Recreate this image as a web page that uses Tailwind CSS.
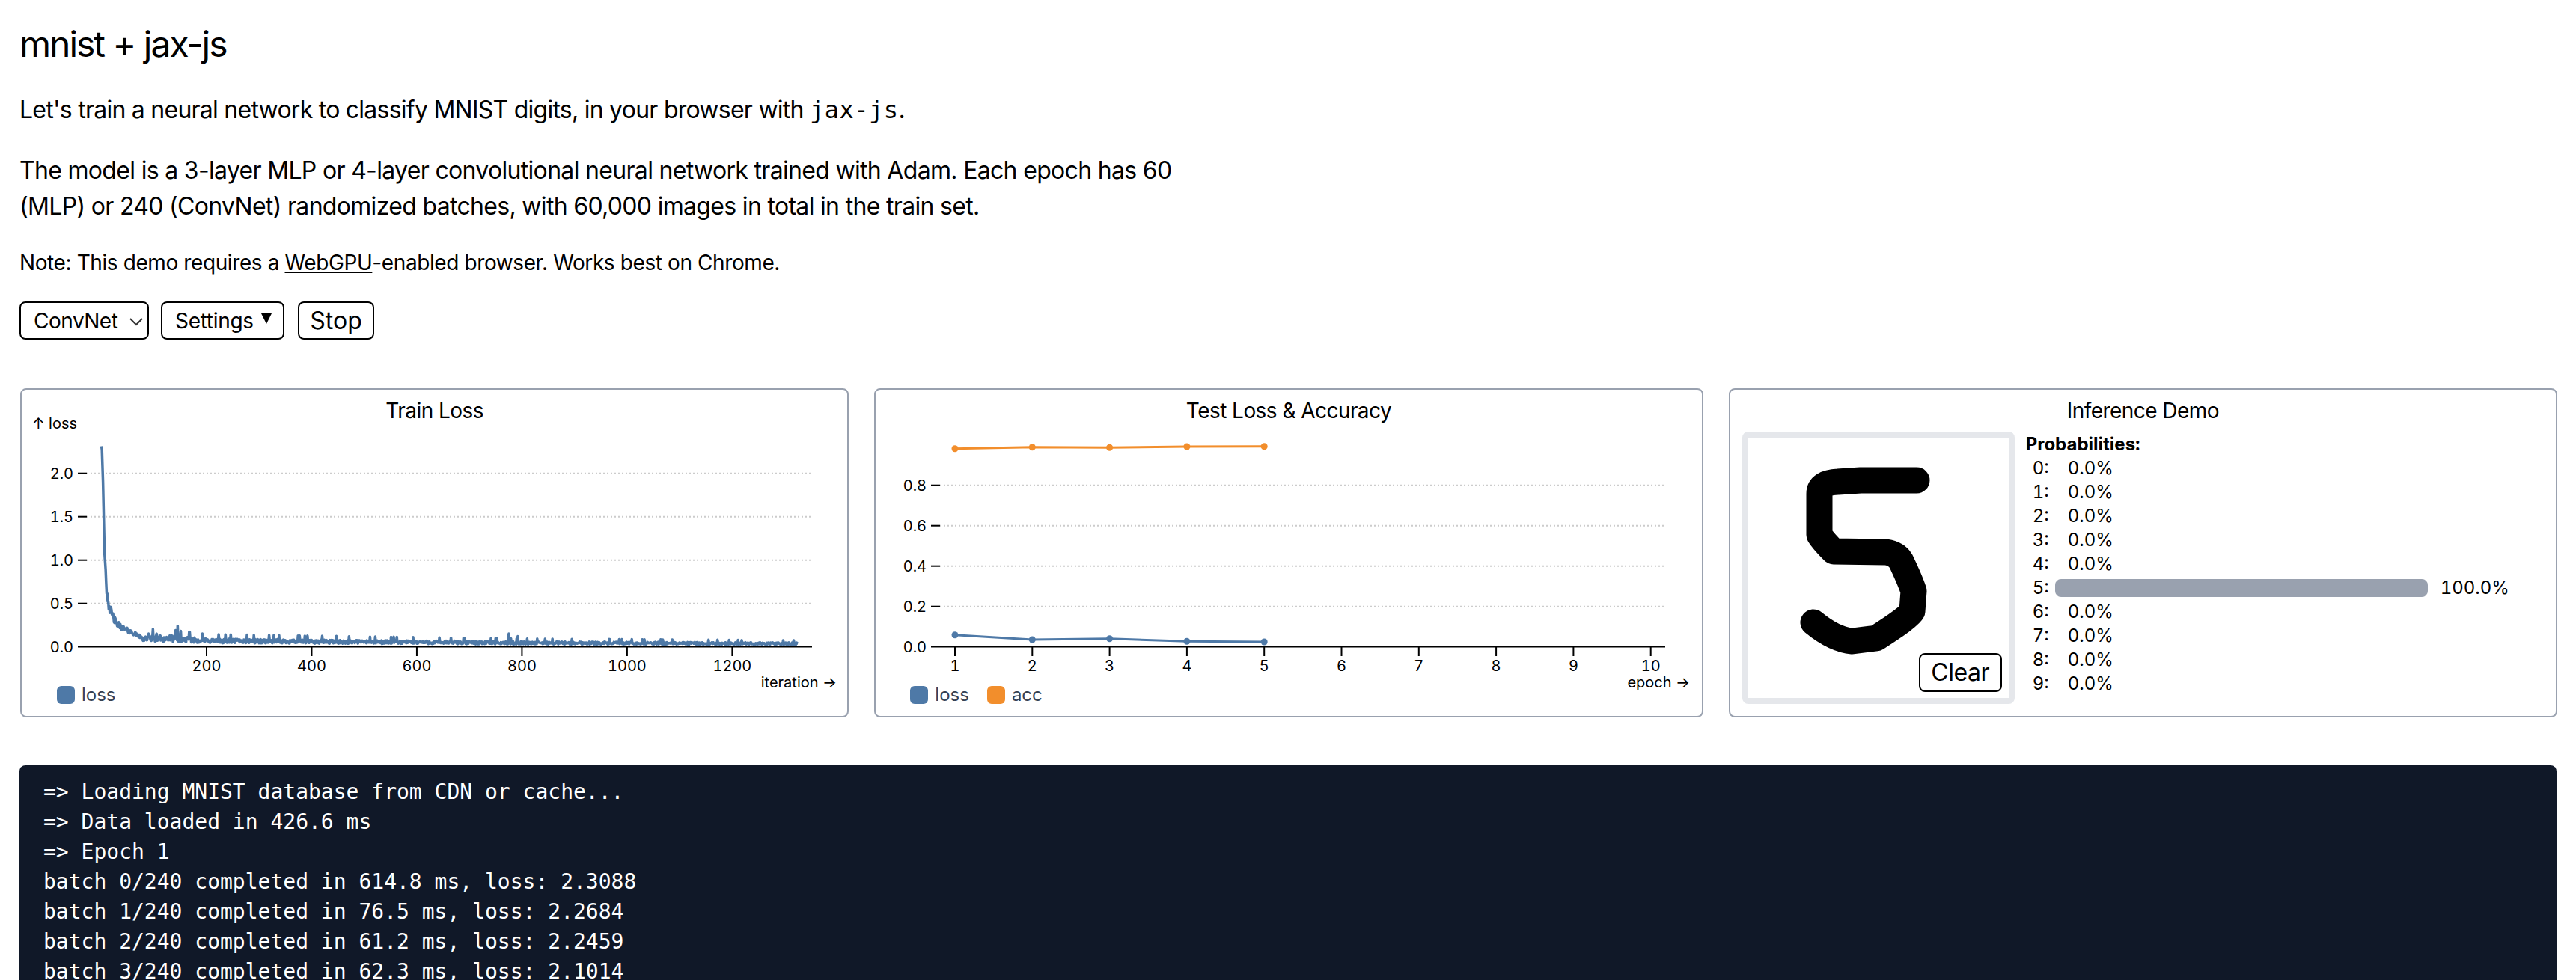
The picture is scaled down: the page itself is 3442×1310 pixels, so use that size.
<!DOCTYPE html>
<html lang="en">

<head>
    <meta charset="UTF-8">
    <meta name="viewport" content="width=device-width, initial-scale=1.0">
    <title>mnist + jax-js</title>
    <script src="https://cdn.jsdelivr.net/npm/@tailwindcss/browser@4"></script>
</head>

<body class="h-[1310px] overflow-hidden bg-white font-['Inter',sans-serif] text-black">
    <main class="px-[26px] pt-[27px]">
        <h1 class="text-[48px] leading-[64px] tracking-[-2px]">mnist + jax-js</h1>

        <p class="mt-[32px] text-[32px] leading-[48px] tracking-[-0.75px]">Let's train a neural network to classify MNIST digits, in your browser with <code class="font-['DejaVu_Sans_Mono',monospace] text-[32px] tracking-[0.5px]">jax-js</code>.</p>

        <p class="mt-[33px] max-w-[1600px] text-[32px] leading-[48px] tracking-[-0.68px]">The model is a 3-layer MLP or 4-layer convolutional neural network trained with Adam. Each epoch has 60 (MLP) or 240 (ConvNet) randomized batches, with 60,000 images in total in the train set.</p>

        <p class="mt-[31px] text-[28px] leading-[40px] tracking-[-0.4px]">Note: This demo requires a <a href="#" class="underline">WebGPU</a>-enabled browser. Works best on Chrome.</p>

        <!-- Controls -->
        <div class="mt-[32px] flex h-[51px]">
            <div class="relative w-[173px]">
                <select class="h-full w-full appearance-none rounded-lg border-2 border-black bg-white pl-[17px] text-[28px] tracking-[-0.5px]">
                    <option>ConvNet</option>
                </select>
                <svg class="absolute left-[147px] top-[22px]" width="18" height="11" viewBox="0 0 18 11" fill="none" stroke="#333" stroke-width="2"><path d="M1 1l8 8 8-8" /></svg>
            </div>
            <button class="ml-[16px] flex w-[165px] items-center rounded-lg border-2 border-black pl-[17px] text-[28px] tracking-[-0.3px]">
                Settings
                <svg class="ml-[10px] mt-[-5px]" width="14" height="14" viewBox="0 0 14 14"><path d="M0 0h14L7 14z" /></svg>
            </button>
            <button class="ml-[18px] w-[102px] rounded-lg border-2 border-black text-[32px]">Stop</button>
        </div>

        <!-- Charts -->
        <div class="ml-[1px] mr-[-1px] mt-[65px] grid h-[440px] grid-cols-3 gap-[34px]">
            <section class="rounded-lg border-2 border-gray-400 pt-[8px]">
                <h2 class="h-[26px] text-center text-[28px] leading-[40px] tracking-[-0.55px]">Train Loss</h2>
                <svg id="train-chart" class="ml-[-1px] block h-[362px] w-full overflow-visible tabular-nums"></svg>
                <div class="flex h-[24px] gap-[24px] pl-[47px] text-[24px] leading-[24px] text-gray-700">
                    <span class="flex gap-[9px]"><i class="h-[24px] w-[24px] rounded-md bg-[#4e79a7]"></i>loss</span>
                </div>
            </section>

            <section class="rounded-lg border-2 border-gray-400 pt-[8px]">
                <h2 class="h-[26px] text-center text-[28px] leading-[40px] tracking-[-0.55px]">Test Loss &amp; Accuracy</h2>
                <svg id="test-chart" class="ml-[-2px] block h-[362px] w-full overflow-visible tabular-nums"></svg>
                <div class="flex h-[24px] gap-[24px] pl-[46px] text-[24px] leading-[24px] text-gray-700">
                    <span class="flex gap-[9px]"><i class="h-[24px] w-[24px] rounded-md bg-[#4e79a7]"></i>loss</span>
                    <span class="flex gap-[9px]"><i class="h-[24px] w-[24px] rounded-md bg-[#f28e2c]"></i>acc</span>
                </div>
            </section>

            <section class="rounded-lg border-2 border-gray-400 pt-[8px]">
                <h2 class="h-[48px] text-center text-[28px] leading-[40px] tracking-[-0.55px]">Inference Demo</h2>
                <div class="flex pl-[16px]">
                    <!-- Drawing canvas -->
                    <div class="relative h-[364px] w-[364px] rounded-lg border-8 border-gray-200">
                        <svg width="348" height="348" fill="none" stroke="#000" stroke-width="35" stroke-linecap="round" stroke-linejoin="round">
                            <path d="M225 57 L190 57 L150 57 L120 59 Q95 60 95 75 L95 130 Q100 138 114 152 L184 153 Q198 155 204 165 Q216 190 221 205 L219 232 Q215 240 171 268 L139 272 Q115 270 87 247" />
                        </svg>
                        <button class="absolute bottom-[8px] right-[9px] h-[52px] w-[111px] rounded-lg border-2 border-black bg-white text-[32px] tracking-[-0.5px]">Clear</button>
                    </div>

                    <!-- Probabilities -->
                    <div class="ml-[15px] pt-[1px] text-[24px] leading-[32px] tabular-nums">
                        <div class="font-bold">Probabilities:</div>
                        <div id="probs"></div>
                    </div>
                </div>
            </section>
        </div>

        <!-- Log -->
        <pre class="mt-[64px] rounded-lg bg-gray-900 px-[32px] py-[16px] font-['DejaVu_Sans_Mono',monospace] text-[28px] leading-[40px] text-white">=&gt; Loading MNIST database from CDN or cache...
=&gt; Data loaded in 426.6 ms
=&gt; Epoch 1
batch 0/240 completed in 614.8 ms, loss: 2.3088
batch 1/240 completed in 76.5 ms, loss: 2.2684
batch 2/240 completed in 61.2 ms, loss: 2.2459
batch 3/240 completed in 62.3 ms, loss: 2.1014</pre>
    </main>

    <script>
    const SVG_NS = "http://www.w3.org/2000/svg";

    function add(svg, tag, attrs, text) {
        const el = document.createElementNS(SVG_NS, tag);
        for (const k in attrs) el.setAttribute(k, attrs[k]);
        if (text) el.textContent = text;
        svg.appendChild(el);
    }

    // Axes in the same shape for both charts, values are pixels inside the svg
    function drawAxes(svg, opts) {
        opts.yTicks.forEach(t => {
            add(svg, "line", { x1: 88, x2: opts.gridEnd, y1: t.y, y2: t.y, stroke: "#ccc", "stroke-width": 2, "stroke-dasharray": "2 3" });
            add(svg, "line", { x1: 76, x2: 88, y1: t.y, y2: t.y, stroke: "#000", "stroke-width": 2 });
            add(svg, "text", { x: 70, y: t.y + 7, "text-anchor": "end", "font-size": 20 }, t.label);
        });
        add(svg, "line", { x1: 76, x2: opts.axisEnd, y1: 309.5, y2: 309.5, stroke: "#000", "stroke-width": 2 });
        add(svg, "text", { x: 70, y: 316.5, "text-anchor": "end", "font-size": 20 }, "0.0");
        opts.xTicks.forEach(t => {
            add(svg, "line", { x1: t.x, x2: t.x, y1: 309.5, y2: 322, stroke: "#000", "stroke-width": 2 });
            add(svg, "text", { x: t.x, y: 342, "text-anchor": "middle", "font-size": 20 }, t.label);
        });
        add(svg, "text", { x: opts.labelEnd, y: 364, "text-anchor": "end", "font-size": 20 }, opts.xLabel);
    }

    // Train loss
    const trainSvg = document.getElementById("train-chart");
    drawAxes(trainSvg, {
        gridEnd: 1056, axisEnd: 1057, labelEnd: 1090, xLabel: "iteration \u2192",
        yTicks: [["2.0", 77.7], ["1.5", 135.7], ["1.0", 193.7], ["0.5", 251.7]].map(([label, y]) => ({ label, y })),
        xTicks: [200, 400, 600, 800, 1000, 1200].map(i => ({ label: String(i), x: 107.5 + i * 0.7024 })),
    });
    add(trainSvg, "text", { x: 15, y: 18, "font-size": 20 }, "\u2191 loss");

    // Small seeded random so the curve is the same on every load
    let seed = 42;
    function rand() {
        seed = (seed * 1664525 + 1013904223) % 4294967296;
        return seed / 4294967296;
    }

    const envelope = [[0, 2.31], [1, 2.27], [3, 1.9], [6, 1.07], [9, 0.8], [11, 0.6], [17, 0.41], [28, 0.27], [45, 0.2], [60, 0.16], [78, 0.1], [130, 0.095], [200, 0.07], [400, 0.06], [800, 0.045], [1325, 0.035]];
    const spikes = { 145: 0.24, 775: 0.15, 792: 0.12, 90: 0.15, 105: 0.15 };

    function baseLoss(i) {
        for (let k = 1; k < envelope.length; k++) {
            if (i <= envelope[k][0]) {
                const [x0, y0] = envelope[k - 1], [x1, y1] = envelope[k];
                return y0 + (y1 - y0) * (i - x0) / (x1 - x0);
            }
        }
        return 0.035;
    }

    let d = "";
    for (let i = 0; i <= 1325; i++) {
        let v = baseLoss(i);
        if (i > 8) {
            const r = rand();
            // noise grows once the curve has flattened out
            const spread = i < 78 ? 0.3 : 0.8;
            v = v * (1 - spread / 2 + spread * r);
            if (i > 78 && r > 0.96) v *= 1.5;
        }
        if (spikes[i]) v = spikes[i];
        d += (i ? "L" : "M") + (107.5 + i * 0.7024).toFixed(2) + " " + (309.5 - v * 116).toFixed(2);
    }
    add(trainSvg, "path", { d, fill: "none", stroke: "#4e79a7", "stroke-width": 3.5, "stroke-linejoin": "round" });

    // Test loss and accuracy
    const testSvg = document.getElementById("test-chart");
    const epochX = e => 108 + (e - 1) * 103.3;
    drawAxes(testSvg, {
        gridEnd: 1055, axisEnd: 1057, labelEnd: 1090, xLabel: "epoch \u2192",
        yTicks: [["0.8", 93.7], ["0.6", 147.7], ["0.4", 201.7], ["0.2", 255.7]].map(([label, y]) => ({ label, y })),
        xTicks: [1, 2, 3, 4, 5, 6, 7, 8, 9, 10].map(e => ({ label: String(e), x: epochX(e) })),
    });
    function series(values, color) {
        add(testSvg, "path", { d: values.map((y, i) => (i ? "L" : "M") + epochX(i + 1) + " " + y).join(""), fill: "none", stroke: color, "stroke-width": 3 });
        values.forEach((y, i) => add(testSvg, "circle", { cx: epochX(i + 1), cy: y, r: 4.5, fill: color }));
    }
    series([44.7, 42.7, 43.3, 42, 41.7], "#f28e2c");
    series([293.7, 300, 298.7, 302.3, 303], "#4e79a7");

    // Probabilities
    let rows = "";
    for (let n = 0; n < 10; n++) {
        const bar = n === 5 ? '<span class="h-[24px] w-[498px] rounded-lg bg-gray-400"></span>' : "";
        const value = n === 5 ? "100.0%" : "0.0%";
        rows += `<div class="flex h-[32px] items-center pl-[9px]"><span class="w-[30px]">${n}:</span>${bar}<span class="ml-[17px]">${value}</span></div>`;
    }
    document.getElementById("probs").innerHTML = rows;
    </script>
</body>
</html>
